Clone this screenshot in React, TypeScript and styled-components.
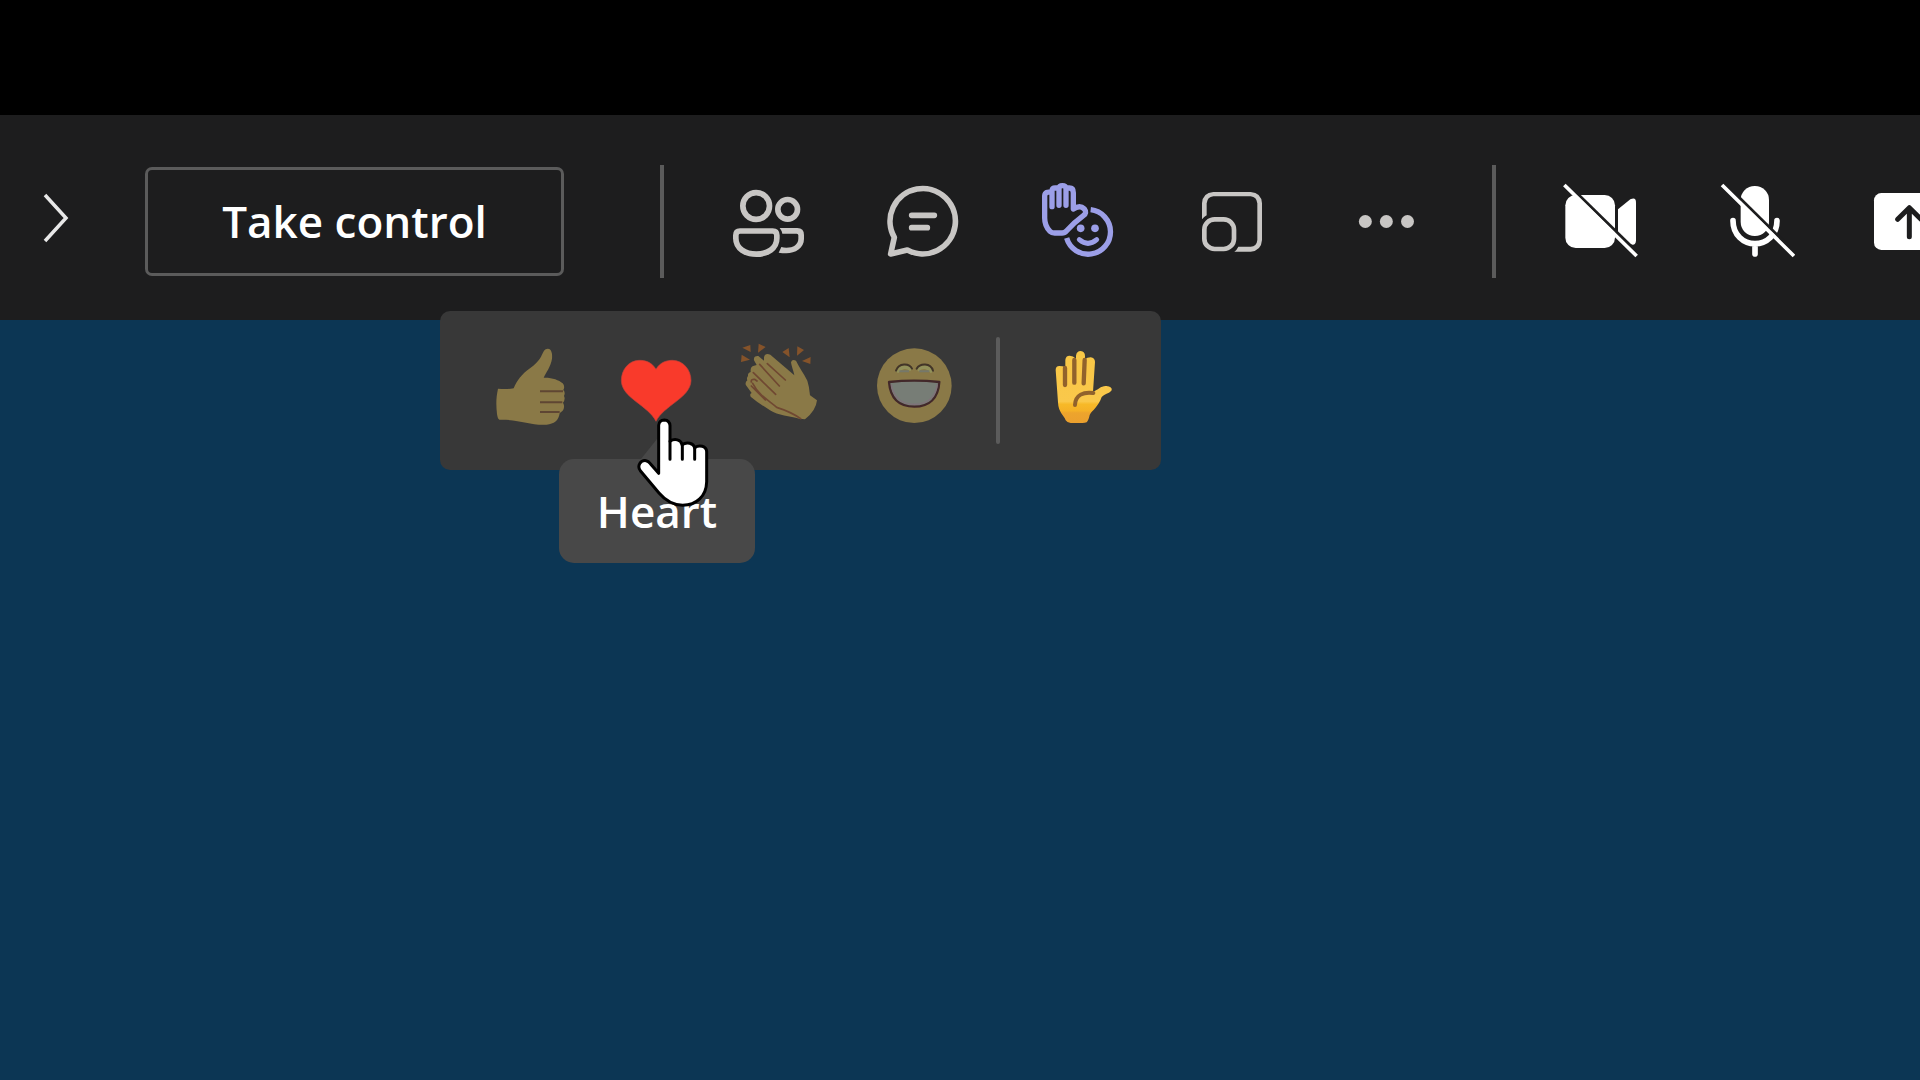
import React from "react";
import styled, { createGlobalStyle } from "styled-components";

const Global = createGlobalStyle`
  html, body, #root { margin: 0; min-height: 100%; }
  body { background: #0c3654; overflow: hidden; font-family: "Open Sans", "Noto Sans", sans-serif; }
  *, *::before, *::after { box-sizing: border-box; }
  button { font: inherit; color: inherit; background: none; border: 0; padding: 0; }
  svg { display: block; }
`;

const Page = styled.main`
  display: flex;
  flex-direction: column;
  min-height: 100vh;
`;

const Letterbox = styled.div`
  height: 115px;
  background: #000;
`;

const Toolbar = styled.header`
  display: flex;
  align-items: center;
  padding: 50px 0 42px;
  background: #1d1d1e;
  overflow: hidden;
`;

const ExpandButton = styled.button`
  flex: none;
  width: 145px;
  padding-left: 36px;
`;

const ControlButton = styled.button`
  flex: none;
  min-width: 419px;
  padding: 0 68px;
  margin-right: 66px;
  border: 3px solid #5b5b5b;
  border-radius: 7px;
  color: #fff;
  font-size: 44px;
  line-height: 103px;
  font-weight: 600;
  white-space: nowrap;
`;

const Separator = styled.span`
  flex: none;
  width: 4px;
  height: 113px;
  margin: 0 28px 0 30px;
  background: #5b5b5b;
`;

const Group = styled.div`
  display: flex;
  flex: none;
`;

const ToolButton = styled.button<{ $tone: string }>`
  display: grid;
  place-items: center;
  width: 154px;
  height: 113px;
  color: ${(p) => p.$tone};
`;

const Stage = styled.section`
  position: relative;
  flex: 1;
  background: #0c3654;
`;

const ReactionMenu = styled.div`
  position: absolute;
  top: -9px;
  left: 440px;
  display: flex;
  align-items: center;
  padding: 16px 15px 17px 28px;
  border-radius: 10px;
  background: #383838;
`;

const ReactionButton = styled.button`
  position: relative;
  width: 126px;
  height: 126px;
`;

const MenuDivider = styled.span`
  width: 4px;
  height: 107px;
  margin: 0 20px 0 24px;
  border-radius: 2px;
  background: #5b5b5b;
`;

const Tooltip = styled.span`
  position: absolute;
  top: 132px;
  left: 50%;
  transform: translateX(-50%);
  min-width: 196px;
  padding: 0 36px;
  border-radius: 15px;
  background: #484848;
  color: #fff;
  font-size: 44px;
  font-weight: 600;
  line-height: 104px;

  &::before {
    content: "";
    position: absolute;
    left: 50%;
    bottom: 100%;
    transform: translateX(-50%);
    border: 16px solid transparent;
    border-top: 0;
    border-bottom: 20px solid #484848;
  }
`;

const Pointer = styled.svg`
  position: absolute;
  top: 90px;
  left: 42px;
  width: 76px;
  height: 92px;
`;

const Glyph = ({ box, children }: { box: string; children: React.ReactNode }) => (
  <svg width="80" height="81" viewBox={`${box} 240 243`} fill="none" stroke="currentColor" strokeWidth="17" strokeLinejoin="round" aria-hidden="true">
    {children}
  </svg>
);

const Emoji = ({ box, children }: { box: string; children: React.ReactNode }) => (
  <svg width="126" height="126" viewBox={`${box} 378 378`} fill="none" aria-hidden="true">
    {children}
  </svg>
);

const PeopleIcon = () => (
  <Glyph box="267 93">
    <circle cx="348.500" cy="168" r="40" />
    <circle cx="443" cy="178" r="29.500" />
    <path d="M300 243H398Q410.500 243 410.500 256V265C410.500 296 382 312.500 349 312.500S287.500 296 287.500 265V256Q287.500 243 300 243Z" />
    <path d="M419 234H472Q492 234 492 255V267C492 294 466 310 439 310Q427 310 416 308L424 291Q431 293 439 293C460 293 475 283 475 266V256Q475 251 470 251H427Q425 241 419 234Z" fill="currentColor" stroke="none" />
  </Glyph>
);

const ChatIcon = () => (
  <Glyph box="729 93">
    <path d="M802 300A98 98 0 1 0 763 262L752 312Z" />
    <path d="M815 196H883M815 233H862" strokeLinecap="round" />
  </Glyph>
);

const ReactIcon = () => (
  <Glyph box="51 63">
    <path d="M212 149A67 67 0 1 1 140 234" strokeWidth="16" />
    <circle cx="182" cy="205" r="11.500" fill="currentColor" stroke="none" />
    <circle cx="225" cy="205" r="11.500" fill="currentColor" stroke="none" />
    <path d="M178 239Q204 261 230 239" strokeLinecap="round" strokeWidth="15" />
    <path
      strokeWidth="16"
      strokeLinecap="round"
      d="M96 140V98Q75 92 74 108V174C74 192 80 204 90 214Q95 219 104 219H126Q134 219 140 212C158 192 170 182 190 167Q202 158 193 147C184 138 172 139 160 147V98Q160 84 148 84H138M96 98V92Q97 83 108 84H117M117 136V84Q118 77 127 77Q137 77 138 84V136"
    />
  </Glyph>
);

const RoomsIcon = () => (
  <Glyph box="513 63">
    <path d="M546 178V130Q548 98 580 96H692Q724 98 726 130V240Q724 272 692 275H643Q651 269 655 260H692Q710 260 712 240V130Q710 111 692 109H580Q562 111 560 130V166Q552 170 546 178Z" fill="currentColor" stroke="none" />
    <rect x="553" y="178" width="89" height="89" rx="31" strokeWidth="14" />
  </Glyph>
);

const MoreIcon = () => (
  <Glyph box="255 93">
    <g fill="currentColor" stroke="none">
      <circle cx="316" cy="214.500" r="19.500" />
      <circle cx="379" cy="214.500" r="19.500" />
      <circle cx="442.500" cy="214.500" r="19.500" />
    </g>
  </Glyph>
);

const CameraOffIcon = () => (
  <Glyph box="63 93">
    <rect x="76" y="135" width="149" height="159" rx="31" fill="currentColor" stroke="none" />
    <path d="M234 178L271 148Q288 140 288 157V272Q286 289 271 282L234 252Z" fill="currentColor" stroke="none" />
    <path d="M108 127L282 297" stroke="#1d1d1e" strokeWidth="9" />
    <path d="M77 109L286 314" strokeWidth="11" strokeLinecap="square" />
  </Glyph>
);

const MicOffIcon = () => (
  <Glyph box="525 93">
    <rect x="602" y="108" width="85" height="150" rx="42" fill="currentColor" stroke="none" />
    <path d="M579 212C579 254 610 281 645 281S711 254 711 212M645 281V312" strokeLinecap="round" />
    <path d="M584 129L748 291" stroke="#1d1d1e" strokeWidth="9" />
    <path d="M550 109L758 314" strokeWidth="11" strokeLinecap="square" />
  </Glyph>
);

const ShareIcon = () => (
  <Glyph box="987 93">
    <rect x="1002" y="129" width="213" height="171" rx="22" fill="currentColor" stroke="none" />
    <path d="M1108 260V173M1073 208L1108 173L1143 208" stroke="#1d1d1e" strokeWidth="15" strokeLinecap="round" />
  </Glyph>
);

const ThumbEmoji = () => (
  <Emoji box="114 81">
    <path
      fill="#8a7947"
      d="M204 266Q228 269 251 265C262 240 274 224 300 205C330 183 333 169 342 152Q348 144 358 147Q368 153 366 176C362 201 348 217 341 233C365 232 386 239 398 250Q406 259 400 270Q407 278 402 288Q407 297 399 308Q406 321 398 332Q393 336 389 340C386 362 372 372 350 374C300 377 268 358 208 359Q203 357 201 342C198 316 198 293 204 266Z"
    />
    <path d="M330 274H399M330 307H397M330 336H389" stroke="#5f4633" strokeWidth="6" />
  </Emoji>
);

const HeartEmoji = () => (
  <Emoji box="492 81">
    <path fill="#f93a2b" stroke="#c3413a" strokeWidth="2" d="M678 208C664 185 645 181 627 181C596 182 574 209 574 242C575 294 655 316 678 364C701 316 781 294 783 242C783 209 760 182 728 181C710 181 691 186 678 208Z" />
  </Emoji>
);

const ClapEmoji = () => (
  <Emoji box="0 21">
    <path
      fill="#8a7947"
      d="M132 112Q135 98 151 104L223 166C220 150 214 138 213 127Q216 116 228 122C236 139 251 160 262 182Q268 200 270 226L291 241Q288 272 255 298L238 296C210 288 174 287 150 271C128 257 109 244 92 230Q88 221 95 219L78 196Q74 187 82 181Q79 173 84 168Q83 158 92 156Q90 139 102 137L110 135L102 121Q100 107 115 108L132 122Z"
    />
    <path d="M142 131L196 180M119 133L178 198M100 158L167 223M94 198L136 240M94 186Q92 177 104 178L111 183M98 190C116 225 144 240 170 262Q214 276 242 296" stroke="#704832" strokeWidth="5" strokeLinecap="round" />
    <path fill="#85532a" d="M67 83L91 75L92 96ZM116 71L137 81L114 98ZM65 104L90 119L63 126ZM187 96L206 84L209 112ZM232 79L252 90L231 107ZM246 123L272 111L271 132Z" />
  </Emoji>
);

const LaughEmoji = () => (
  <Emoji box="378 21">
    <circle cx="583" cy="197" r="112" fill="#8a7947" />
    <path d="M530 156Q552 130 574 150M592 150Q616 130 637 156" stroke="#92915a" strokeWidth="11" />
    <path d="M538 154H567M598 154H628" stroke="#76786a" strokeWidth="6" />
    <path d="M528 152C536 128 568 129 576 146M590 146C600 129 632 128 639 152" stroke="#423528" strokeWidth="6" strokeLinecap="round" />
    <path d="M507 186Q583 178 658 186C655 235 628 260 583 260S511 235 507 186Z" fill="#777d76" stroke="#42282a" strokeWidth="7" strokeLinejoin="round" />
    <path d="M514 193C520 233 546 253 583 253S646 233 652 193" stroke="#81717b" strokeWidth="4" />
  </Emoji>
);

const RaisedHandEmoji = () => (
  <Emoji box="180 81">
    <defs>
      <linearGradient id="palm" x1="0" y1="153" x2="0" y2="369" gradientUnits="userSpaceOnUse">
        <stop offset="0" stopColor="#f8c746" />
        <stop offset=".7" stopColor="#fac84b" />
        <stop offset=".74" stopColor="#f7b928" />
        <stop offset=".83" stopColor="#f5b127" />
        <stop offset=".86" stopColor="#eda42d" />
        <stop offset="1" stopColor="#eba02e" />
      </linearGradient>
    </defs>
    <path
      fill="url(#palm)"
      d="M287 210Q287 198 298 198Q308 198 316 202V180Q317 167 329 167Q339 167 348 176V167Q350 153 362 153Q375 154 375 168V178Q381 172 392 172Q405 174 405 186L399 275C415 270 422 257 439 258Q458 260 455 271C449 280 434 282 425 291C415 321 396 331 389 345Q386 361 380 367Q375 369 367 369H332Q322 369 317 361C312 345 295 338 294 307Z"
    />
    <path d="M315 204V255M343 180V248M374 180L371 250" stroke="#91622c" strokeWidth="13" strokeLinecap="round" />
    <path d="M345 315C346 284 371 275 400 279" stroke="#91622c" strokeWidth="12" strokeLinecap="round" />
  </Emoji>
);

const HandPointer = () => (
  <Pointer viewBox="618 351 228 276" aria-hidden="true">
    <path
      fill="#fff"
      stroke="#000"
      strokeWidth="9"
      strokeLinejoin="round"
      d="M686 520V376Q687 361 703 360Q719 361 720 377V424C734 414 753 419 756 434C770 424 791 429 794 443C808 433 829 438 830 455V545C829 589 799 615 758 616C727 615 704 599 687 579L631 512C620 497 632 480 648 482Q655 483 661 491Z"
    />
    <path d="M720 424V478M757 434V478M794 443V478" stroke="#000" strokeWidth="9" strokeLinecap="round" />
  </Pointer>
);

const meetingTools = [
  { label: "People", tone: "#c8c6c4", icon: <PeopleIcon /> },
  { label: "Chat", tone: "#c8c6c4", icon: <ChatIcon /> },
  { label: "Reactions", tone: "#9c9fe8", icon: <ReactIcon /> },
  { label: "Rooms", tone: "#c8c6c4", icon: <RoomsIcon /> },
  { label: "More actions", tone: "#c8c6c4", icon: <MoreIcon /> },
];

const deviceTools = [
  { label: "Turn camera on", tone: "#fff", icon: <CameraOffIcon /> },
  { label: "Unmute", tone: "#fff", icon: <MicOffIcon /> },
  { label: "Share content", tone: "#fff", icon: <ShareIcon /> },
];

const ToolGroup = ({ tools }: { tools: typeof meetingTools }) => (
  <Group>
    {tools.map((t) => (
      <ToolButton key={t.label} $tone={t.tone} aria-label={t.label}>
        {t.icon}
      </ToolButton>
    ))}
  </Group>
);

export default function App() {
  return (
    <Page>
      <Global />
      <Letterbox />
      <Toolbar>
        <ExpandButton aria-label="Expand">
          <svg width="40" height="60" viewBox="0 0 40 60" fill="none" stroke="#e8e8e8" strokeWidth="3.500" aria-hidden="true">
            <path d="M9 3L30 26L9 49" />
          </svg>
        </ExpandButton>
        <ControlButton>Take control</ControlButton>
        <Separator />
        <ToolGroup tools={meetingTools} />
        <Separator />
        <ToolGroup tools={deviceTools} />
      </Toolbar>
      <Stage>
        <ReactionMenu role="toolbar" aria-label="Reactions">
          <ReactionButton aria-label="Like"><ThumbEmoji /></ReactionButton>
          <ReactionButton aria-labelledby="heart-tip">
            <HeartEmoji />
            <Tooltip id="heart-tip" role="tooltip">Heart</Tooltip>
            <HandPointer />
          </ReactionButton>
          <ReactionButton aria-label="Applause"><ClapEmoji /></ReactionButton>
          <ReactionButton aria-label="Laugh"><LaughEmoji /></ReactionButton>
          <MenuDivider />
          <ReactionButton aria-label="Raise hand"><RaisedHandEmoji /></ReactionButton>
        </ReactionMenu>
      </Stage>
    </Page>
  );
}
